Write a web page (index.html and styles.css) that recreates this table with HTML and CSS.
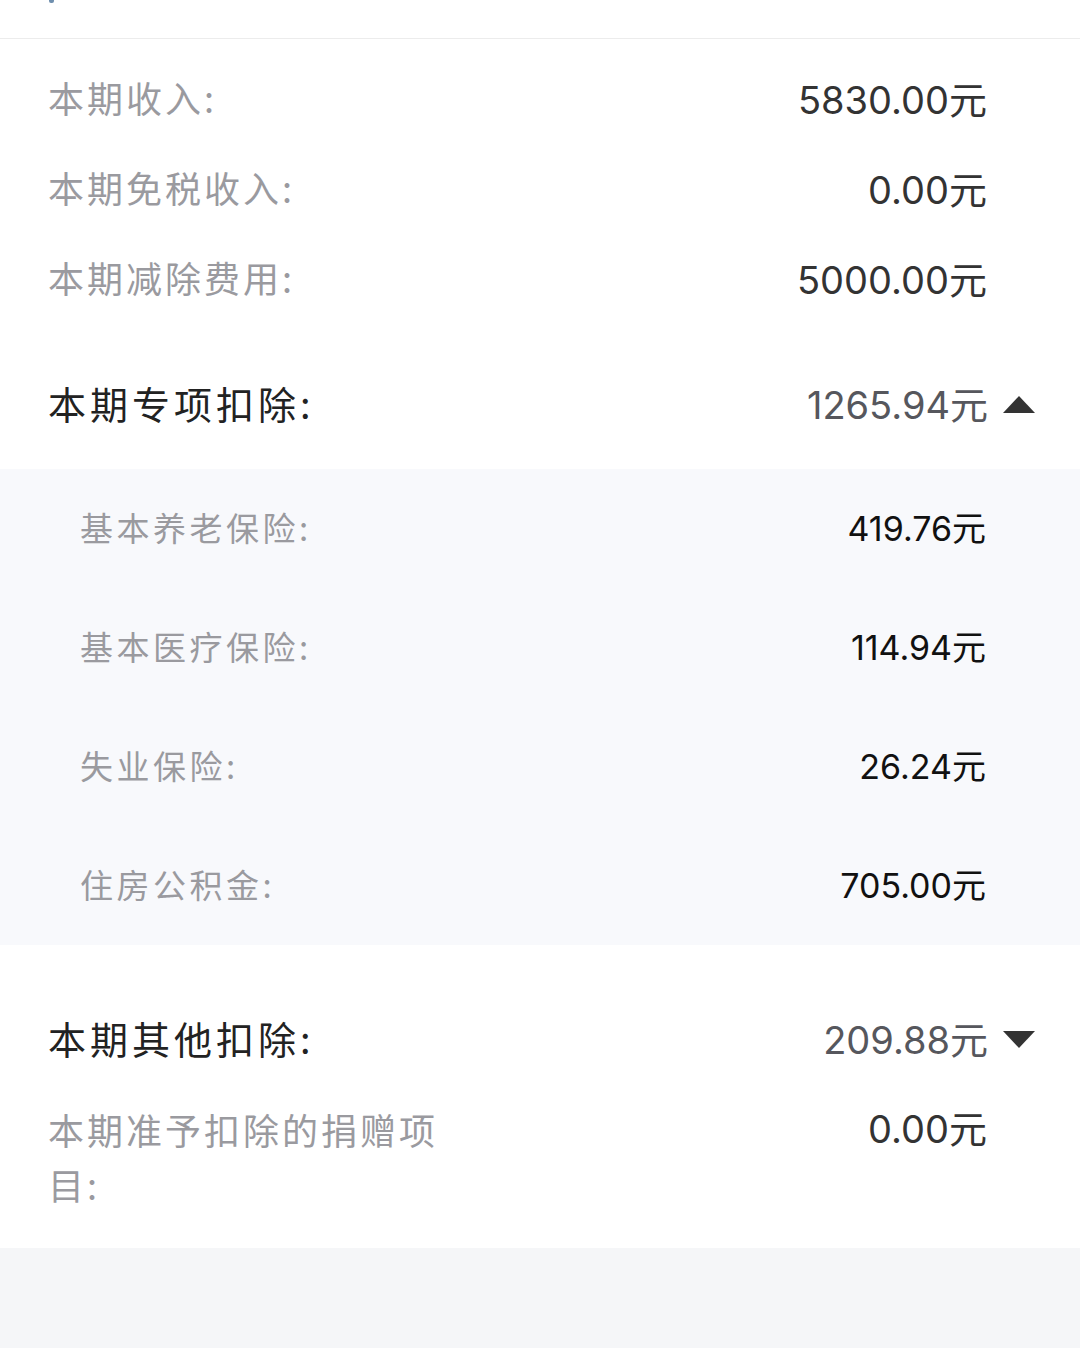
FILE: index.html
```html
<!DOCTYPE html>
<html lang="zh-CN">
<head>
<meta charset="utf-8">
<title>个税明细</title>
<link rel="stylesheet" href="styles.css">
</head>
<body>
<div class="page">
  <div class="topbar"><span class="mark"></span></div>
  <div class="content">
    <div class="row">
      <span class="label">本期收入:</span>
      <span class="value">5830.00元</span>
    </div>
    <div class="row">
      <span class="label">本期免税收入:</span>
      <span class="value">0.00元</span>
    </div>
    <div class="row">
      <span class="label">本期减除费用:</span>
      <span class="value">5000.00元</span>
    </div>
    <div class="row head head-first">
      <span class="head-label">本期专项扣除:</span>
      <span class="head-right">
        <span class="head-value">1265.94元</span>
        <svg class="tri" width="32" height="17" viewBox="0 0 32 17"><polygon points="16,0 32,17 0,17" fill="#333"/></svg>
      </span>
    </div>
    <div class="panel">
      <div class="sub-row">
        <span class="sub-label">基本养老保险:</span>
        <span class="sub-value">419.76元</span>
      </div>
      <div class="sub-row">
        <span class="sub-label">基本医疗保险:</span>
        <span class="sub-value">114.94元</span>
      </div>
      <div class="sub-row">
        <span class="sub-label">失业保险:</span>
        <span class="sub-value">26.24元</span>
      </div>
      <div class="sub-row">
        <span class="sub-label">住房公积金:</span>
        <span class="sub-value">705.00元</span>
      </div>
    </div>
    <div class="row head head-second">
      <span class="head-label">本期其他扣除:</span>
      <span class="head-right">
        <span class="head-value">209.88元</span>
        <svg class="tri" width="32" height="17" viewBox="0 0 32 17"><polygon points="0,0 32,0 16,17" fill="#333"/></svg>
      </span>
    </div>
    <div class="row multi">
      <span class="label wrap">本期准予扣除的捐赠项目:</span>
      <span class="value">0.00元</span>
    </div>
  </div>
  <div class="footer"></div>
</div>
</body>
</html>
```

FILE: styles.css
```css
* { box-sizing: border-box; }
html, body { margin: 0; padding: 0; background: #fff; }
body {
  font-family: Inter, "Noto Sans CJK SC", "Noto Sans", sans-serif;
  width: 1080px;
  height: 1348px;
  overflow: hidden;
}
.page { display: flex; flex-direction: column; height: 1348px; }
.topbar {
  height: 39px;
  border-bottom: 1px solid #ececec;
  position: relative;
}
.mark {
  position: absolute;
  left: 49px;
  top: 0;
  width: 5px;
  height: 3px;
  border-radius: 0 0 2px 2px;
  background: #6f8fae;
}
.content {
  background: #fff;
  padding-top: 13px;
  padding-bottom: 36px;
}
.row {
  display: flex;
  justify-content: space-between;
  align-items: center;
  height: 90px;
  padding: 0 93px 0 48px;
}
.label {
  font-family: "Noto Sans CJK SC", sans-serif;
  font-size: 36px;
  letter-spacing: 3px;
  color: #9a9a9f;
}
.value {
  font-size: 38px;
  color: #333;
}
.head { padding-right: 45px; }
.head-first { margin-top: 35px; margin-bottom: 22px; }
.head-second { margin-top: 47px; }
.head-label {
  font-family: "Noto Sans CJK SC", sans-serif;
  font-size: 38px;
  letter-spacing: 4px;
  color: #222;
}
.head-right { display: flex; align-items: center; gap: 15px; }
.head-value { font-size: 38px; color: #56575d; }
.tri { display: block; margin-top: 4px; }
.panel { background: #f8f9fc; }
.sub-row {
  display: flex;
  justify-content: space-between;
  align-items: center;
  height: 119px;
  padding: 0 94px 4px 80px;
}
.sub-label {
  font-family: "Noto Sans CJK SC", sans-serif;
  font-size: 33px;
  letter-spacing: 3.5px;
  color: #9a9a9f;
}
.sub-value { font-size: 34px; color: #111; }
.multi {
  height: auto;
  align-items: flex-start;
  padding-top: 20px;
}
.multi .label, .multi .value { line-height: 55px; }
.wrap { width: 410px; }
.footer { flex: 1; background: #f5f6f8; }
```
